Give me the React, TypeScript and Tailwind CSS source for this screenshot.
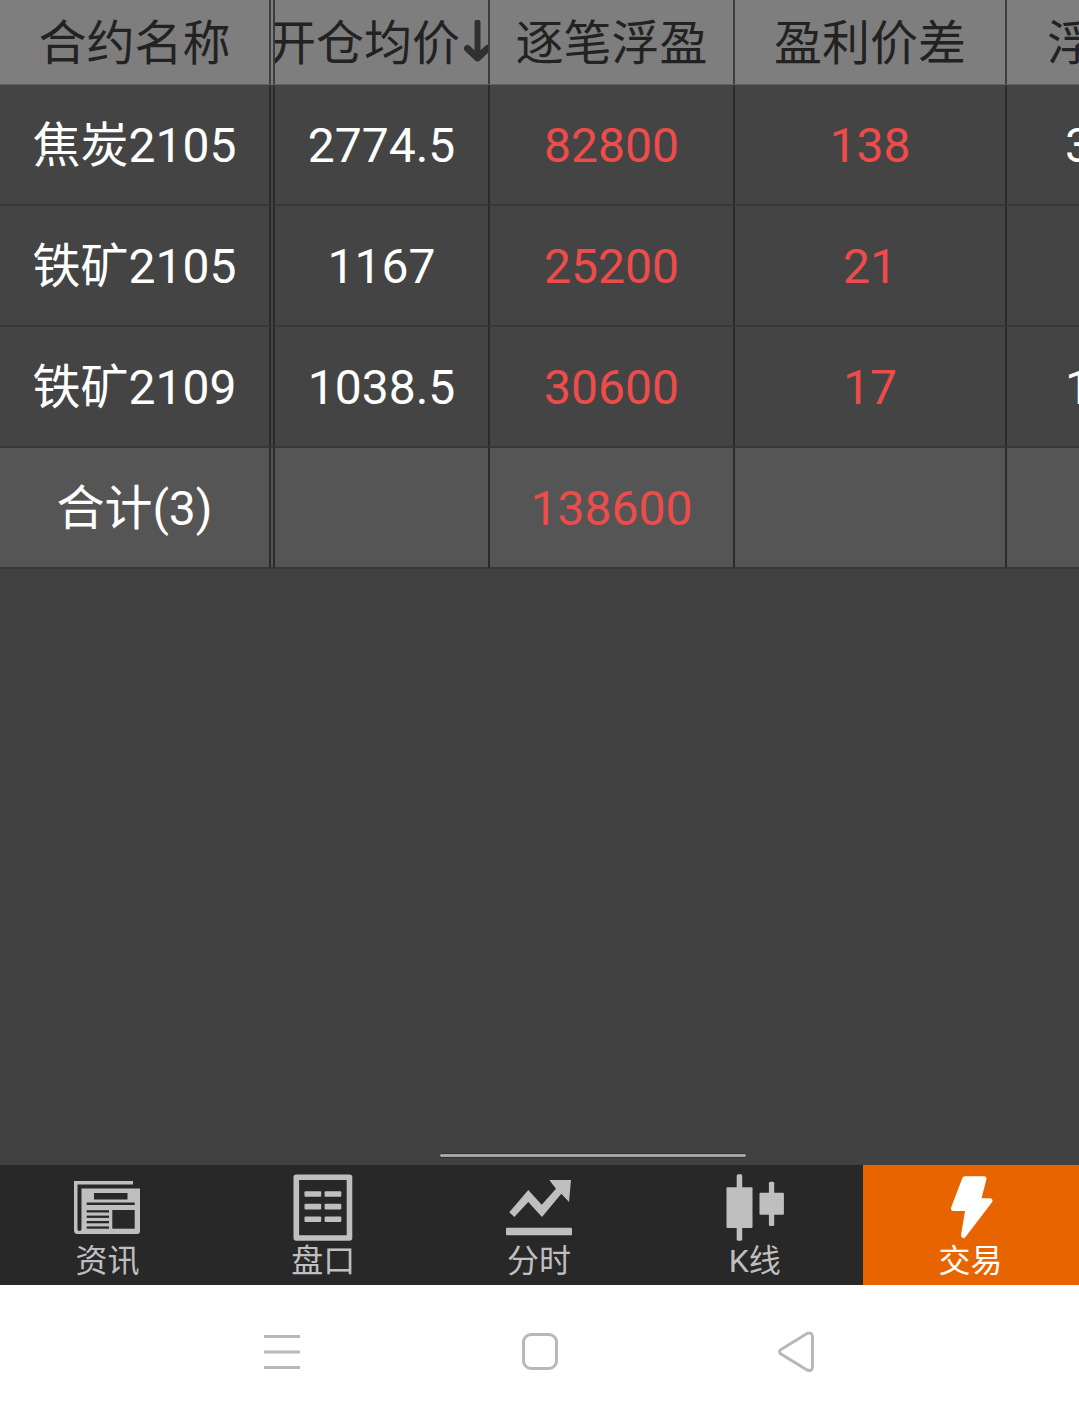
import { useState } from "react";
import type { ReactNode } from "react";

type Row = {
  name: string;
  price: string;
  profit: string;
  spread: string;
  float: string;
};

const rows: Row[] = [
  { name: "焦炭2105", price: "2774.5", profit: "82800", spread: "138", float: "3" },
  { name: "铁矿2105", price: "1167", profit: "25200", spread: "21", float: "" },
  { name: "铁矿2109", price: "1038.5", profit: "30600", spread: "17", float: "1" },
];

const columns = "grid grid-cols-[271px_4px_215px_245px_272px_72px]";
const cell = "flex items-center justify-center overflow-hidden whitespace-nowrap border-r-2 border-[#2b2b2b] border-b-2 border-b-[#383838] pt-[3px]";
const headCell = "flex items-center justify-center overflow-hidden whitespace-nowrap border-r-2 border-[#3c3c3c] pt-[3px]";

function SortArrow() {
  return (
    <svg className="h-[48px] w-[35px] shrink-0" viewBox="0 0 35 48" fill="none" stroke="#303030" strokeLinecap="round">
      <path d="M17.5 2.500v35" strokeWidth="6" />
      <path d="M7.500 28.500l10 9.500L27.500 28.500" strokeWidth="7" strokeLinejoin="round" />
    </svg>
  );
}

function NewsIcon() {
  return (
    <svg className="size-[72px]" viewBox="0 0 72 72" fill="#bfbfbf">
      <path d="M2 10H61V13.500H5.500V58a2 2 0 0 0 4 0V17.500H68V60a3 3 0 0 1-3 3H5.500a3.500 3.500 0 0 1-3.500-3.500Z" />
      <g fill="#282828">
        <rect x="22" y="22" width="33.500" height="6.500" />
        <rect x="14.700" y="31.500" width="48" height="2.500" />
        <rect x="14.700" y="39.200" width="22.300" height="2.300" />
        <rect x="14.700" y="44.600" width="22.300" height="2.300" />
        <rect x="14.700" y="50" width="22.300" height="2.300" />
        <rect x="14.700" y="55.400" width="22.300" height="2.300" />
        <rect x="40.300" y="39" width="22.400" height="18.700" />
      </g>
    </svg>
  );
}

function QuoteIcon() {
  return (
    <svg className="size-[72px]" viewBox="0 0 72 72" fill="#bfbfbf">
      <rect x="8.300" y="6.200" width="53.200" height="60.800" fill="none" stroke="#bfbfbf" strokeWidth="5.600" strokeLinejoin="round" />
      {[20.2, 32.8, 45.4].map((y) => (
        <g key={y}>
          <rect x="16.500" y={y} width="16.700" height="5.600" rx="1" />
          <rect x="36.600" y={y} width="16.700" height="5.600" rx="1" />
        </g>
      ))}
    </svg>
  );
}

function TrendIcon() {
  return (
    <svg className="size-[72px]" viewBox="0 0 72 72" fill="#bfbfbf">
      <path d="M6.300 41.300 25.300 19 38.700 33.700 53 17.700 46.300 9H68L66 31 58.300 22.700 39 46 25.300 31 11.300 46Z" />
      <rect x="3" y="56.700" width="66" height="7.600" rx="1" />
    </svg>
  );
}

function CandleIcon() {
  return (
    <svg className="size-[72px]" viewBox="0 0 72 72" fill="#bfbfbf">
      <rect x="7.500" y="16.300" width="26" height="40.700" rx="1" />
      <rect x="17.700" y="3.300" width="5.500" height="66.400" rx="1.500" />
      <rect x="40.500" y="21.700" width="24.400" height="22" rx="1" />
      <rect x="49.900" y="10.700" width="5.300" height="44.300" rx="1.500" />
    </svg>
  );
}

function BoltIcon() {
  return (
    <svg className="size-[72px]" viewBox="0 0 72 72" fill="#fff" stroke="#fff" strokeWidth="5" strokeLinejoin="round">
      <path d="M29.800 7.700H49L43.300 29.800H55L28.500 64.500 33 37.500H18.500Z" />
    </svg>
  );
}

const tabs: { label: string; icon: ReactNode }[] = [
  { label: "资讯", icon: <NewsIcon /> },
  { label: "盘口", icon: <QuoteIcon /> },
  { label: "分时", icon: <TrendIcon /> },
  { label: "K线", icon: <CandleIcon /> },
  { label: "交易", icon: <BoltIcon /> },
];

export default function App() {
  const [active, setActive] = useState(4);

  return (
    <div className="flex h-[1417px] w-[1079px] flex-col overflow-hidden bg-[#414141] font-[Roboto,'Noto_Sans_CJK_SC',sans-serif] text-[48px] leading-none text-white">
      <div className={`${columns} h-[85px] border-b border-[#606060] bg-[#7e7e7e] text-[#222]`}>
        <div className={headCell}>合约名称</div>
        <div className={headCell} />
        <div className={headCell}>
          <span>开仓均价</span>
          <SortArrow />
        </div>
        <div className={headCell}>逐笔浮盈</div>
        <div className={headCell}>盈利价差</div>
        <div className="flex items-center overflow-hidden pt-[3px] pl-10">
          <span className="shrink-0">浮</span>
        </div>
      </div>

      {rows.map((row) => (
        <div key={row.name} className={`${columns} h-[121px] bg-[#444]`}>
          <div className={cell}>{row.name}</div>
          <div className={cell} />
          <div className={cell}>{row.price}</div>
          <div className={`${cell} text-[#ee4c4a]`}>{row.profit}</div>
          <div className={`${cell} text-[#ee4c4a]`}>{row.spread}</div>
          <div className="flex items-center overflow-hidden border-b-2 border-[#383838] pt-[3px] pl-[58px]">{row.float}</div>
        </div>
      ))}

      <div className={`${columns} h-[121px] bg-[#555]`}>
        <div className={cell}>合计(3)</div>
        <div className={cell} />
        <div className={cell} />
        <div className={`${cell} text-[#ee4c4a]`}>138600</div>
        <div className={cell} />
        <div className="border-b-2 border-[#383838]" />
      </div>

      <div className="flex flex-1 items-end pb-[7px] pl-[439px]">
        <div className="h-[5px] w-[308px] rounded-full border border-[#303030] bg-[#a5a5a5]" />
      </div>

      <nav className="grid h-[120px] grid-cols-5 bg-[#282828] text-[32px]">
        {tabs.map((tab, i) => (
          <button
            key={tab.label}
            onClick={() => setActive(i)}
            className={`flex flex-col items-center pt-1.5 ${i === active ? "bg-[#e86400] text-white" : "text-[#bfbfbf]"}`}
          >
            {tab.icon}
            <span className="pr-px leading-[37px]">{tab.label}</span>
          </button>
        ))}
      </nav>

      <div className="flex h-[132px] items-center gap-[217px] bg-white pl-[262px]">
        <svg className="size-10" viewBox="0 0 40 40" stroke="#b8b8b8" strokeWidth="3">
          <path d="M2 5.500H38M2 21H38M2 36.500H38" />
        </svg>
        <svg className="size-10" viewBox="0 0 40 40" fill="none" stroke="#b8b8b8" strokeWidth="3">
          <rect x="4.500" y="3.500" width="33" height="34" rx="7.500" />
        </svg>
        <svg className="size-11" viewBox="0 0 44 44" fill="none" stroke="#b8b8b8" strokeWidth="3">
          <path d="M5 20.500 31 4.500Q36 2.500 36.500 7.500V38Q36 43 31 41L5 25Q2 22.700 5 20.500Z" />
        </svg>
      </div>
    </div>
  );
}
